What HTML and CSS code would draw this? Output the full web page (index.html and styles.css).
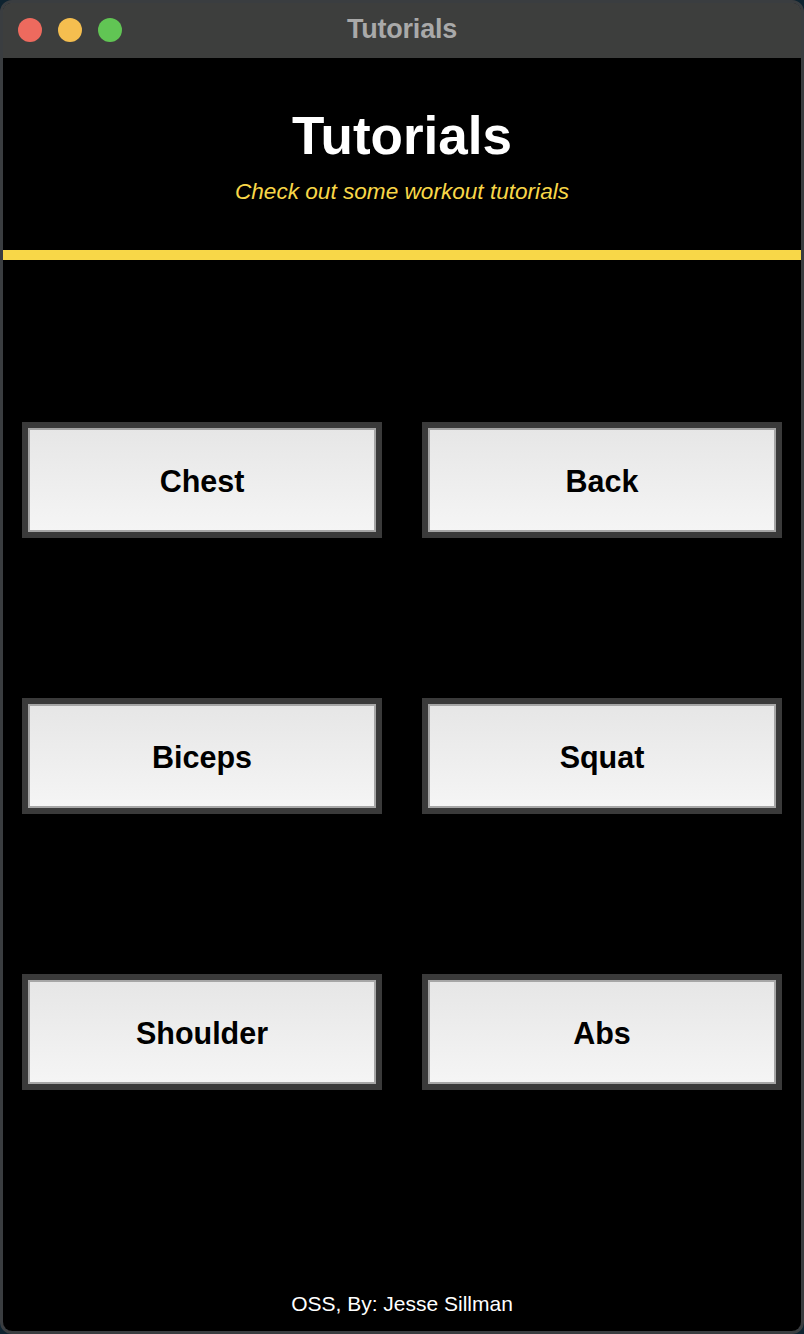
FILE: index.html
```html
<!DOCTYPE html>
<html>
<head>
<meta charset="utf-8">
<link rel="stylesheet" href="styles.css">
</head>
<body>
<div class="window">
  <div class="titlebar">
    <div class="lights">
      <span class="light red"></span>
      <span class="light yellow"></span>
      <span class="light green"></span>
    </div>
    <div class="wtitle">Tutorials</div>
  </div>
  <div class="content">
    <header class="header">
      <h1 class="title">Tutorials</h1>
      <p class="subtitle">Check out some workout tutorials</p>
    </header>
    <div class="rule"></div>
    <main class="grid">
      <button class="btn">Chest</button>
      <button class="btn">Back</button>
      <button class="btn">Biceps</button>
      <button class="btn">Squat</button>
      <button class="btn">Shoulder</button>
      <button class="btn">Abs</button>
    </main>
    <footer class="footer">OSS, By: Jesse Sillman</footer>
  </div>
</div>
</body>
</html>
```
FILE: styles.css
```css
* { box-sizing: border-box; }
html, body {
  margin: 0;
  padding: 0;
  background: #0e2330;
  font-family: "Liberation Sans", Arial, sans-serif;
}
.window {
  width: 804px;
  height: 1334px;
  border-radius: 12px;
  border: 3px solid #3a3d40;
  background: #000;
  overflow: hidden;
  display: flex;
  flex-direction: column;
  box-shadow: inset 0 0 0 1px #5a5c5e;
}
.titlebar {
  height: 55px;
  background: #3d3e3d;
  position: relative;
  display: flex;
  align-items: center;
  justify-content: center;
  flex: none;
}
.lights {
  position: absolute;
  left: 15px;
  top: 15px;
  display: flex;
  gap: 16px;
}
.light {
  width: 24px;
  height: 24px;
  border-radius: 50%;
  display: block;
}
.red { background: #ee6a5e; }
.yellow { background: #f5be4f; }
.green { background: #61c554; }
.wtitle {
  color: #a9a9a9;
  font-weight: bold;
  font-size: 27px;
  letter-spacing: -0.2px;
  margin-top: -2px;
}
.content {
  flex: 1;
  display: flex;
  flex-direction: column;
  background: #000;
}
.header {
  height: 192px;
  padding-top: 48px;
  text-align: center;
  flex: none;
}
.title {
  margin: 0;
  color: #fff;
  font-size: 53px;
  line-height: 60px;
  font-weight: bold;
}
.subtitle {
  margin: 12px 0 0;
  color: #f8d748;
  font-style: italic;
  font-size: 22.6px;
  line-height: 28px;
}
.rule {
  height: 10px;
  background: #f8d748;
  flex: none;
}
.grid {
  display: grid;
  grid-template-columns: 360px 360px;
  grid-auto-rows: 116px;
  column-gap: 40px;
  row-gap: 160px;
  padding: 162px 19px 0;
  flex: 1;
  align-content: start;
}
.btn {
  border: 6px solid #3a3a3a;
  box-shadow: inset 0 0 0 2px #a6a6a6;
  background: linear-gradient(#e6e6e6, #f5f5f5);
  font-family: "Liberation Sans", Arial, sans-serif;
  font-weight: bold;
  font-size: 30.5px;
  color: #000;
  padding: 2px 0 0;
  margin: 0;
  border-radius: 0;
}
.footer {
  color: #fff;
  font-size: 21px;
  line-height: 24px;
  text-align: center;
  padding-bottom: 15px;
  flex: none;
}
```
